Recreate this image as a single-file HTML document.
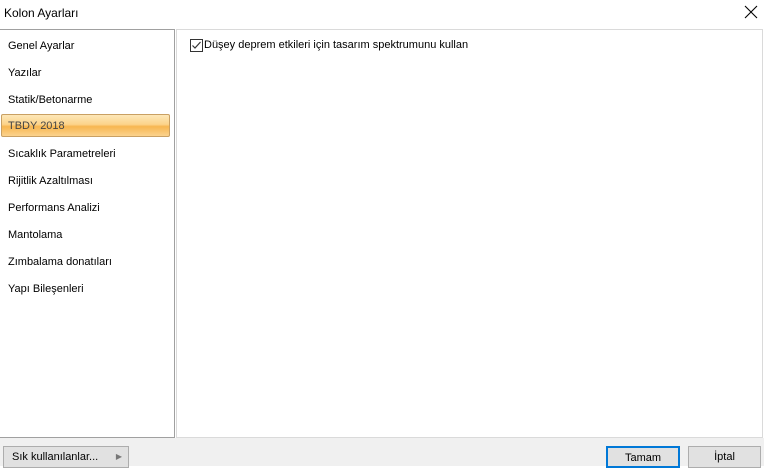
<!DOCTYPE html>
<html><head><meta charset="utf-8"><style>
*{margin:0;padding:0;box-sizing:border-box}
body{width:764px;height:466px;background:#fff;font-family:"Liberation Sans",Arial,sans-serif;font-size:11px;color:#000;position:relative;overflow:hidden}
.title{position:absolute;left:4px;top:6px;font-size:12px}
.close{position:absolute;left:744px;top:5px}
.left{position:absolute;left:0;top:29px;width:175px;height:409px;border:1px solid #a0a0a0;border-left:none;background:#fff}
.item{position:absolute;left:8px;height:20px;line-height:20px}
.sel{position:absolute;left:1px;top:84px;width:169px;height:23px;border:1px solid #c9a063;border-radius:2px;background:linear-gradient(#fde7b8 0%,#fcd38a 45%,#f7b650 55%,#fbd38e 100%)}
.right{position:absolute;left:176px;top:29px;width:587px;height:409px;border:1px solid #dadada;background:#fff}
.bottom{position:absolute;left:0;top:438px;width:764px;height:28px;background:#f0f0f0}
.btn{position:absolute;top:446px;height:22px;background:#e1e1e1;border:1px solid #adadad;text-align:center;line-height:19px}
</style></head><body>
<div class="title">Kolon Ayarları</div>
<svg class="close" width="14" height="14"><path d="M1 1L13 13M13 1L1 13" stroke="#000" stroke-width="1.1"/></svg>
<div class="right">
<svg style="position:absolute;left:13px;top:9px" width="13" height="13"><rect x="0.5" y="0.5" width="12" height="12" fill="#fff" stroke="#333"/><path d="M2.5 6.5L5 9L10.5 3" stroke="#333" stroke-width="1.2" fill="none"/></svg>
<div style="position:absolute;left:27px;top:9px">Düşey deprem etkileri için tasarım spektrumunu kullan</div>
</div>
<div class="left">
<div class="sel"></div>
<div class="item" style="top:6px">Genel Ayarlar</div>
<div class="item" style="top:33px">Yazılar</div>
<div class="item" style="top:60px">Statik/Betonarme</div>
<div class="item" style="top:86px;color:#444">TBDY 2018</div>
<div class="item" style="top:114px">Sıcaklık Parametreleri</div>
<div class="item" style="top:141px">Rijitlik Azaltılması</div>
<div class="item" style="top:168px">Performans Analizi</div>
<div class="item" style="top:195px">Mantolama</div>
<div class="item" style="top:222px">Zımbalama donatıları</div>
<div class="item" style="top:249px">Yapı Bileşenleri</div>
</div>
<div class="bottom"></div>
<div class="btn" style="left:3px;width:126px;text-align:left;padding-left:8px;line-height:20px">Sık kullanılanlar...<span style="position:absolute;right:6px;top:0;color:#777;font-size:8px">▶</span></div>
<div class="btn" style="left:606px;width:74px;border:2px solid #0078d7;line-height:20px">Tamam</div>
<div class="btn" style="left:688px;width:73px;line-height:21px">İptal</div>
</body></html>
